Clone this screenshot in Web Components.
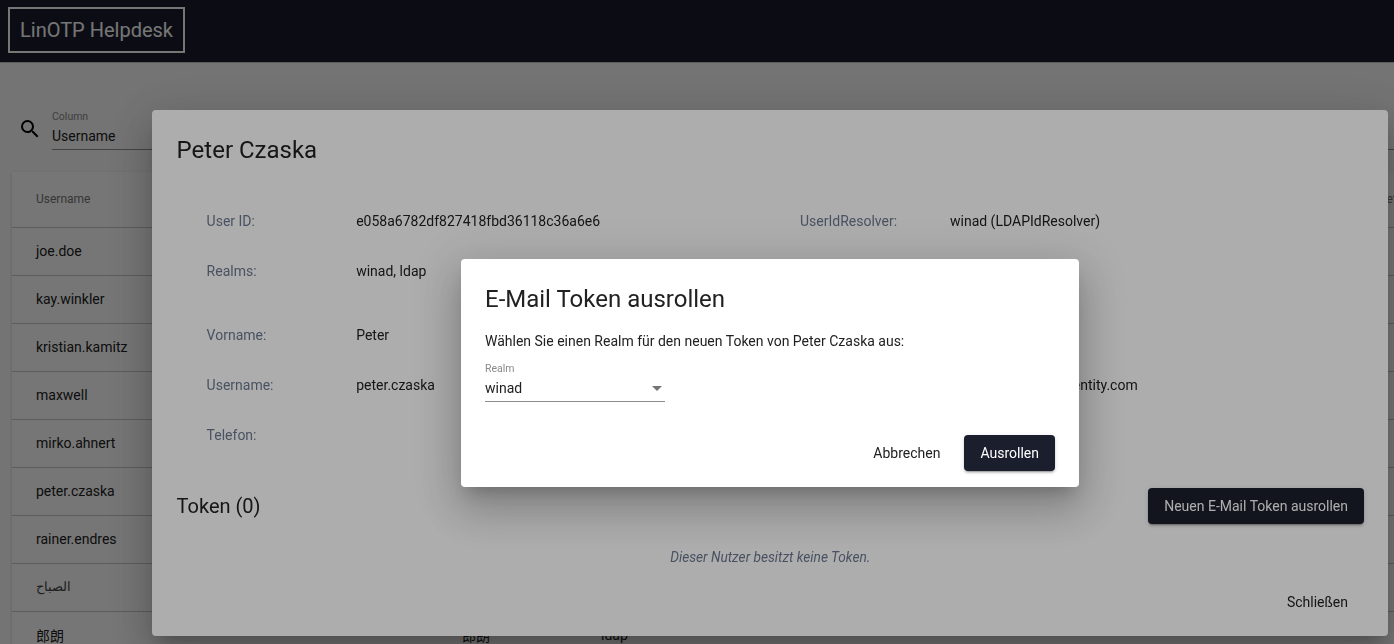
<!DOCTYPE html>
<html>
<head>
<meta charset="utf-8">
<style>
html, body { margin: 0; height: 100%; overflow: hidden; }
body { font-family: Roboto, "Noto Sans CJK SC", sans-serif; background: #fafafa; }
</style>
</head>
<body>
<helpdesk-app>
  <helpdesk-toolbar slot="toolbar">LinOTP Helpdesk</helpdesk-toolbar>
  <search-field>Username</search-field>
  <user-table></user-table>
</helpdesk-app>

<modal-layer style="--top:110px;--left:152px;--width:1236px;--height:526px">
  <user-details></user-details>
</modal-layer>

<modal-layer style="--top:259px;--left:461px;--width:618px;--height:228px">
  <rollout-dialog></rollout-dialog>
</modal-layer>

<script>
const appTemplate = document.createElement('template');
appTemplate.innerHTML = `
  <style>
  :host { display: block; height: 644px; overflow: hidden; background: #fafafa; }
  main { padding: 46px 0 0 12px; }
  </style>
  <slot name="toolbar"></slot>
  <main><slot></slot></main>
`;
class HelpdeskApp extends HTMLElement {
  constructor() {
    super();
    this.attachShadow({ mode: 'open' });
    this.shadowRoot.appendChild(appTemplate.content.cloneNode(true));
  }
}

const toolbarTemplate = document.createElement('template');
toolbarTemplate.innerHTML = `
  <style>
  :host {
    display: flex; align-items: center; height: 63px; padding-left: 8px; box-sizing: border-box;
    background: #1b1e2d; color: #fff; border-bottom: 1px solid #c4c4c4;
  }
  .logo {
    border: 2px solid #fff; padding: 0 10px; height: 46px; box-sizing: border-box; margin-top: -2px;
    display: flex; align-items: center; font-size: 20px; font-weight: 400;
  }
  </style>
  <div class="logo"><slot></slot></div>
`;
class HelpdeskToolbar extends HTMLElement {
  constructor() {
    super();
    this.attachShadow({ mode: 'open' });
    this.shadowRoot.appendChild(toolbarTemplate.content.cloneNode(true));
  }
}

const searchTemplate = document.createElement('template');
searchTemplate.innerHTML = `
  <style>
  :host { display: flex; align-items: flex-start; height: 63px; color: #000; }
  svg { width: 24px; height: 24px; margin: 8px 10px 0 6px; flex: none; }
  .field { flex: 1; height: 41px; padding-top: 2px; border-bottom: 1px solid #919191; box-sizing: border-box; }
  label { display: block; font-size: 10.5px; line-height: 12px; color: #8a8a8a; margin-bottom: 3px; }
  .value { font-size: 14px; line-height: 20px; color: #212121; }
  </style>
  <svg viewBox="0 0 24 24"><path d="M15.5 14h-.79l-.28-.27A6.47 6.47 0 0 0 16 9.5 6.5 6.5 0 1 0 9.5 16c1.61 0 3.09-.59 4.23-1.57l.27.28v.79l5 4.99L20.49 19l-4.99-5zm-6 0C7.01 14 5 11.99 5 9.5S7.01 5 9.5 5 14 7.01 14 9.5 11.99 14 9.5 14z"/></svg>
  <div class="field">
    <label>Column</label>
    <div class="value"><slot></slot></div>
  </div>
`;
class SearchField extends HTMLElement {
  constructor() {
    super();
    this.attachShadow({ mode: 'open' });
    this.shadowRoot.appendChild(searchTemplate.content.cloneNode(true));
  }
}

const tableTemplate = document.createElement('template');
tableTemplate.innerHTML = `
  <style>
  :host {
    display: block; background: #fff; font-size: 14px; color: #212121;
    box-shadow: 0 2px 1px -1px rgba(0,0,0,.2), 0 1px 1px 0 rgba(0,0,0,.14), 0 1px 3px 0 rgba(0,0,0,.12);
  }
  .row {
    display: grid; grid-template-columns: 426px 139px 1fr; height: 48px; align-items: center;
    padding: 0 0 2px 24px; border-bottom: 1px solid #c8c8c8; box-sizing: border-box;
  }
  .head { grid-template-columns: 1343px 1fr; height: 56px; font-size: 12px; color: #757575; white-space: nowrap; }
  .arabic { font-size: 12.5px; color: #444; }
  </style>
  <div class="row head"><span>Username</span><span>Reference</span></div>
  <div id="rows"></div>
`;
const users = [
  ['joe.doe'], ['kay.winkler'], ['kristian.kamitz'], ['maxwell'], ['mirko.ahnert'],
  ['peter.czaska'], ['rainer.endres'], ['الصباح'], ['郎朗', '郎朗', 'ldap']
];
class UserTable extends HTMLElement {
  constructor() {
    super();
    this.attachShadow({ mode: 'open' });
    this.shadowRoot.appendChild(tableTemplate.content.cloneNode(true));
    const rows = this.shadowRoot.getElementById('rows');
    users.forEach(cells => {
      const row = document.createElement('div');
      row.className = 'row';
      cells.forEach(c => {
        const span = document.createElement('span');
        span.textContent = c;
        if (c === 'الصباح') span.className = 'arabic';
        row.appendChild(span);
      });
      rows.appendChild(row);
    });
  }
}

const layerTemplate = document.createElement('template');
layerTemplate.innerHTML = `
  <style>
  :host { position: fixed; inset: 0; display: block; background: rgba(0,0,0,.32); }
  .box {
    position: absolute; top: var(--top); left: var(--left); width: var(--width); height: var(--height);
    background: #fff; border-radius: 4px; color: #212121;
    box-shadow: 0 11px 15px -7px rgba(0,0,0,.2), 0 24px 38px 3px rgba(0,0,0,.14), 0 9px 46px 8px rgba(0,0,0,.12);
  }
  </style>
  <div class="box"><slot></slot></div>
`;
class ModalLayer extends HTMLElement {
  constructor() {
    super();
    this.attachShadow({ mode: 'open' });
    this.shadowRoot.appendChild(layerTemplate.content.cloneNode(true));
  }
}

const buttonTemplate = document.createElement('template');
buttonTemplate.innerHTML = `
  <style>
  :host {
    display: inline-flex; align-items: center; height: 36px; padding: 0 16px; border-radius: 4px;
    font-size: 14px; font-weight: 400; box-sizing: border-box; white-space: nowrap;
  }
  :host([raised]) {
    background: #1b1e2d; color: #fff;
    box-shadow: 0 3px 1px -2px rgba(0,0,0,.2), 0 2px 2px 0 rgba(0,0,0,.14), 0 1px 5px 0 rgba(0,0,0,.12);
  }
  </style>
  <slot></slot>
`;
class ActionButton extends HTMLElement {
  constructor() {
    super();
    this.attachShadow({ mode: 'open' });
    this.shadowRoot.appendChild(buttonTemplate.content.cloneNode(true));
  }
}

const detailsTemplate = document.createElement('template');
detailsTemplate.innerHTML = `
  <style>
  :host { display: flex; flex-direction: column; height: 100%; padding: 24px 24px 16px 24.6px; box-sizing: border-box; font-size: 14px; }
  h2 { margin: 0; font-size: 24px; font-weight: 400; line-height: 32px; }
  .info {
    display: grid; grid-template-columns: 149.6px 443.8px 150px 1fr; grid-auto-rows: 50px;
    margin: 30px 0 0 30px; align-items: center;
  }
  .info + .info { margin-top: 14px; }
  .label { color: #6c7a91; }
  .head { display: flex; justify-content: space-between; align-items: center; margin-top: 28px; }
  h3 { margin: 0; font-size: 20px; font-weight: 400; }
  .empty { text-align: center; font-style: italic; font-size: 13.7px; line-height: 16px; color: #6c7a91; margin-top: 25px; }
  .foot { margin-top: auto; display: flex; justify-content: flex-end; }
  </style>
  <h2>Peter Czaska</h2>
  <div class="info">
    <span class="label">User ID:</span><span>e058a6782df827418fbd36118c36a6e6</span>
    <span class="label">UserIdResolver:</span><span>winad (LDAPIdResolver)</span>
    <span class="label">Realms:</span><span>winad, ldap</span>
  </div>
  <div class="info">
    <span class="label">Vorname:</span><span>Peter</span><span></span><span></span>
    <span class="label">Username:</span><span>peter.czaska</span>
    <span></span><span>peter.czaska@tst-identity.com</span>
    <span class="label">Telefon:</span>
  </div>
  <div class="head">
    <h3>Token (0)</h3>
    <action-button raised>Neuen E-Mail Token ausrollen</action-button>
  </div>
  <div class="empty">Dieser Nutzer besitzt keine Token.</div>
  <div class="foot"><action-button>Schließen</action-button></div>
`;
class UserDetails extends HTMLElement {
  constructor() {
    super();
    this.attachShadow({ mode: 'open' });
    this.shadowRoot.appendChild(detailsTemplate.content.cloneNode(true));
  }
}

const rolloutTemplate = document.createElement('template');
rolloutTemplate.innerHTML = `
  <style>
  :host { display: flex; flex-direction: column; height: 100%; padding: 24px 24px 16px; box-sizing: border-box; font-size: 14px; }
  h2 { margin: 0; font-size: 24px; font-weight: 400; line-height: 32px; }
  p { margin: 16px 0 0; line-height: 20px; }
  .select { width: 180px; margin-top: 12px; border-bottom: 1px solid #8c8c8c; height: 39px; box-sizing: border-box; }
  label { display: block; font-size: 10.5px; line-height: 12px; color: #8a8a8a; }
  .value { display: flex; justify-content: space-between; align-items: center; line-height: 20px; margin-top: 3px; }
  .arrow { width: 0; height: 0; border: 5px solid transparent; border-top-color: #757575; border-bottom: 0; margin-right: 3px; }
  .foot { margin-top: auto; display: flex; justify-content: flex-end; gap: 8px; }
  </style>
  <h2>E-Mail Token ausrollen</h2>
  <p>Wählen Sie einen Realm für den neuen Token von Peter Czaska aus:</p>
  <div class="select">
    <label>Realm</label>
    <div class="value"><span>winad</span><span class="arrow"></span></div>
  </div>
  <div class="foot">
    <action-button>Abbrechen</action-button>
    <action-button raised>Ausrollen</action-button>
  </div>
`;
class RolloutDialog extends HTMLElement {
  constructor() {
    super();
    this.attachShadow({ mode: 'open' });
    this.shadowRoot.appendChild(rolloutTemplate.content.cloneNode(true));
  }
}

customElements.define('helpdesk-app', HelpdeskApp);
customElements.define('helpdesk-toolbar', HelpdeskToolbar);
customElements.define('search-field', SearchField);
customElements.define('user-table', UserTable);
customElements.define('modal-layer', ModalLayer);
customElements.define('action-button', ActionButton);
customElements.define('user-details', UserDetails);
customElements.define('rollout-dialog', RolloutDialog);
</script>
</body>
</html>
